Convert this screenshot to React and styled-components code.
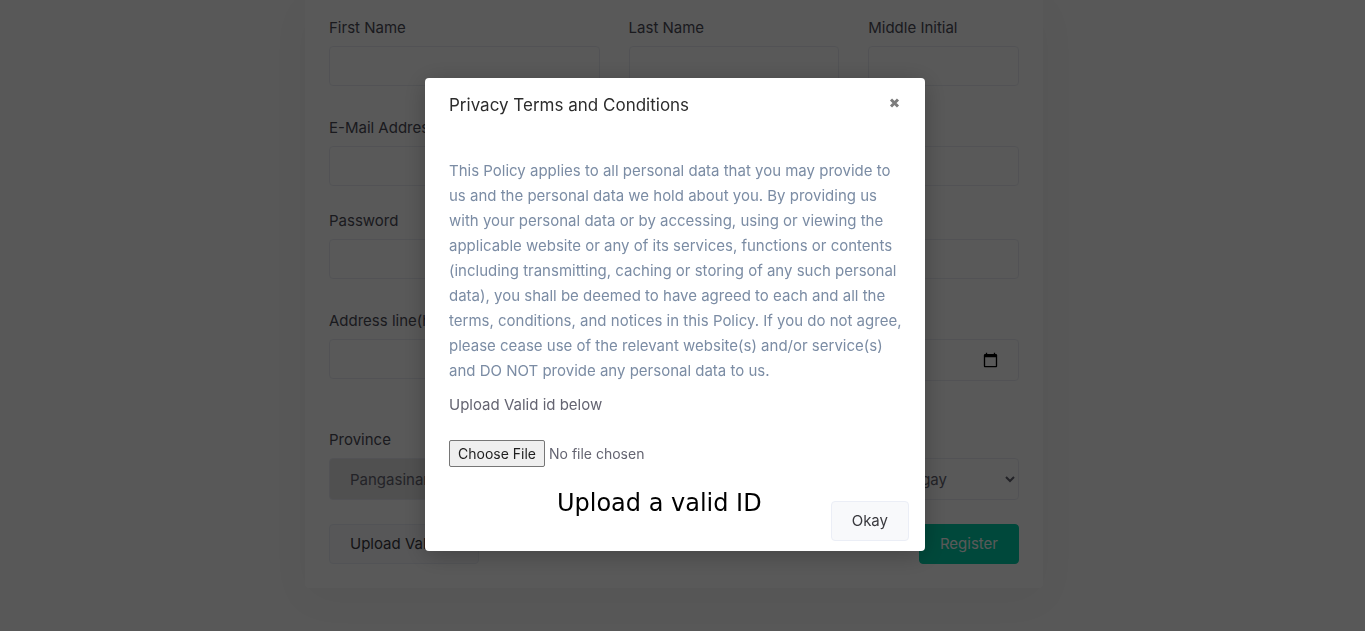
import React from "react";
import styled, { createGlobalStyle } from "styled-components";

const GlobalStyle = createGlobalStyle`
  *, *::before, *::after { box-sizing: border-box; }
  html, body { margin: 0; }
  body {
    overflow: hidden;
    background: #fbfbfb;
    color: #646471;
    font-family: Inter, "Liberation Sans", sans-serif;
    font-size: 15px;
    line-height: 20px;
  }
  button, input, select { font: inherit; color: inherit; }
`;

/* The right padding stands in for the scrollbar hidden while the dialog is open. */
const Page = styled.main`
  min-height: 100vh;
  padding: 0 17px 0 0;
`;

const Card = styled.form`
  max-width: 738px;
  margin: 0 auto;
  padding: 18px 24px 24px;
  border-radius: 0 0 4px 4px;
  background: #ffffff;
  box-shadow: 0 10px 40px rgba(0, 0, 0, 0.04);
`;

const Row = styled.div`
  display: grid;
  grid-template-columns: ${(p) => p.$columns};
  column-gap: 29px;
  margin-bottom: ${(p) => p.$gap}px;
`;

const Field = styled.div`
  display: flex;
  flex-direction: column;
  gap: 8px;
  min-width: 0;
`;

const Label = styled.label`
  white-space: nowrap;
  color: #4c4c58;
`;

const Input = styled.input`
  width: 100%;
  height: ${(p) => (p.type === "date" ? 42 : 40)}px;
  padding: 0 ${(p) => (p.type === "date" ? 17 : 20)}px;
  border: 1px solid #ebecf4;
  border-radius: 4px;
  background: transparent;
  font-size: ${(p) => (p.type === "date" ? 17 : 15)}px;
`;

const Select = styled.select`
  width: 100%;
  height: 42px;
  padding: 0 16px;
  border: 1px solid #ebecf4;
  border-radius: 4px;
  background: ${(p) => (p.$filled ? "#e6e6e6" : "transparent")};
`;

const Actions = styled.div`
  display: flex;
  justify-content: space-between;
`;

const Button = styled.button`
  height: 40px;
  padding: 0 20px;
  border: 1px solid ${(p) => (p.$primary ? "#00cfa8" : "#ebeef6")};
  border-radius: 4px;
  background: ${(p) => (p.$primary ? "#00cfa8" : "#f8f9fb")};
  color: ${(p) => (p.$primary ? "#ffffff" : "#3a3a3f")};
  font-weight: 400;
  white-space: nowrap;
`;

const Backdrop = styled.div`
  position: fixed;
  inset: 0;
  display: flex;
  align-items: flex-start;
  justify-content: center;
  padding: 78px 15px 0 0;
  background: rgba(0, 0, 0, 0.65);
`;

const Dialog = styled.section`
  width: 100%;
  max-width: 500px;
  border-radius: 4px;
  background: #ffffff;
  box-shadow: 0 4px 24px rgba(0, 0, 0, 0.25);
`;

const DialogHeader = styled.header`
  display: flex;
  justify-content: space-between;
  align-items: flex-start;
  padding: 15px 24px 0;
`;

const Title = styled.h1`
  margin: 0;
  color: #2c2c2c;
  font-size: 17px;
  font-weight: 400;
  line-height: 24px;
`;

const Close = styled.button`
  display: flex;
  padding: 5px 1px;
  border: 0;
  background: none;
  color: #7c7c7c;
`;

const DialogBody = styled.div`
  padding: 41px 24px 0;
`;

const Policy = styled.p`
  margin: 0;
  color: #7b8ca4;
  line-height: 25px;
  white-space: nowrap;
`;

const Upload = styled.div`
  display: flex;
  flex-direction: column;
  gap: 25px;
  padding-top: 12px;
`;

const FileInput = styled.input`
  width: 100%;
  height: 28px;
  color: #646471;
  font-size: 14px;

  &::file-selector-button {
    height: 27px;
    margin: 0 4px 0 0;
    padding: 0 8px;
    border: 1px solid #767676;
    border-radius: 2px;
    background: #efefef;
    color: #1e1e1e;
    font: inherit;
  }
`;

const DialogFooter = styled.footer`
  display: flex;
  justify-content: flex-end;
  align-items: flex-start;
  gap: 69px;
  padding: 17px 16px 10px;
`;

const Caption = styled.p`
  margin: 0;
  color: #000000;
  font-family: "DejaVu Sans", sans-serif;
  font-size: 24px;
  line-height: 36px;
  white-space: nowrap;
`;

const FooterAction = styled.div`
  padding-top: 16px;
`;

const policyLines = [
  "This Policy applies to all personal data that you may provide to",
  "us and the personal data we hold about you. By providing us",
  "with your personal data or by accessing, using or viewing the",
  "applicable website or any of its services, functions or contents",
  "(including transmitting, caching or storing of any such personal",
  "data), you shall be deemed to have agreed to each and all the",
  "terms, conditions, and notices in this Policy. If you do not agree,",
  "please cease use of the relevant website(s) and/or service(s)",
  "and DO NOT provide any personal data to us.",
];

function TextField({ id, label, type = "text" }) {
  return (
    <Field>
      <Label htmlFor={id}>{label}</Label>
      <Input id={id} type={type} />
    </Field>
  );
}

function SelectField({ id, label, option, filled }) {
  return (
    <Field>
      <Label htmlFor={id}>{label}</Label>
      <Select id={id} $filled={filled}>
        <option>{option}</option>
      </Select>
    </Field>
  );
}

export default function App() {
  return (
    <>
      <GlobalStyle />
      <Page>
        <Card>
          <Row $columns="271fr 211fr 151fr" $gap={32}>
            <TextField id="first" label="First Name" />
            <TextField id="last" label="Last Name" />
            <TextField id="middle" label="Middle Initial" />
          </Row>
          <Row $columns="1fr" $gap={25}>
            <TextField id="email" label="E-Mail Address" type="email" />
          </Row>
          <Row $columns="1fr 1fr" $gap={32}>
            <TextField id="password" label="Password" type="password" />
            <TextField id="confirm" label="Confirm" type="password" />
          </Row>
          <Row $columns="1fr 1fr" $gap={49}>
            <TextField id="address" label="Address line(house no.)" />
            <TextField id="birth" label="Birthday" type="date" />
          </Row>
          <Row $columns="236fr 236fr 160fr" $gap={24}>
            <SelectField id="province" label="Province" option="Pangasinan" filled />
            <SelectField id="city" label="City" option="City" />
            <SelectField id="barangay" label="Brgy." option="Barangay" />
          </Row>
          <Actions>
            <Button type="button">Upload Valid ID</Button>
            <Button type="button" $primary>Register</Button>
          </Actions>
        </Card>
      </Page>
      <Backdrop>
        <Dialog role="dialog" aria-modal="true" aria-labelledby="dialog-title">
          <DialogHeader>
            <Title id="dialog-title">Privacy Terms and Conditions</Title>
            <Close type="button" aria-label="Close">
              <svg width="11" height="10" viewBox="0 0 11 10" fill="none" stroke="currentColor" strokeWidth="3">
                <path d="M2 1.5 9 8.5M9 1.5 2 8.5" />
              </svg>
            </Close>
          </DialogHeader>
          <DialogBody>
            <Policy>
              {policyLines.map((line) => (
                <React.Fragment key={line}>
                  {line}
                  <br />
                </React.Fragment>
              ))}
            </Policy>
            <Upload>
              <label htmlFor="valid-id">Upload Valid id below</label>
              <FileInput id="valid-id" type="file" />
            </Upload>
          </DialogBody>
          <DialogFooter>
            <Caption>Upload a valid ID</Caption>
            <FooterAction>
              <Button type="button">Okay</Button>
            </FooterAction>
          </DialogFooter>
        </Dialog>
      </Backdrop>
    </>
  );
}
